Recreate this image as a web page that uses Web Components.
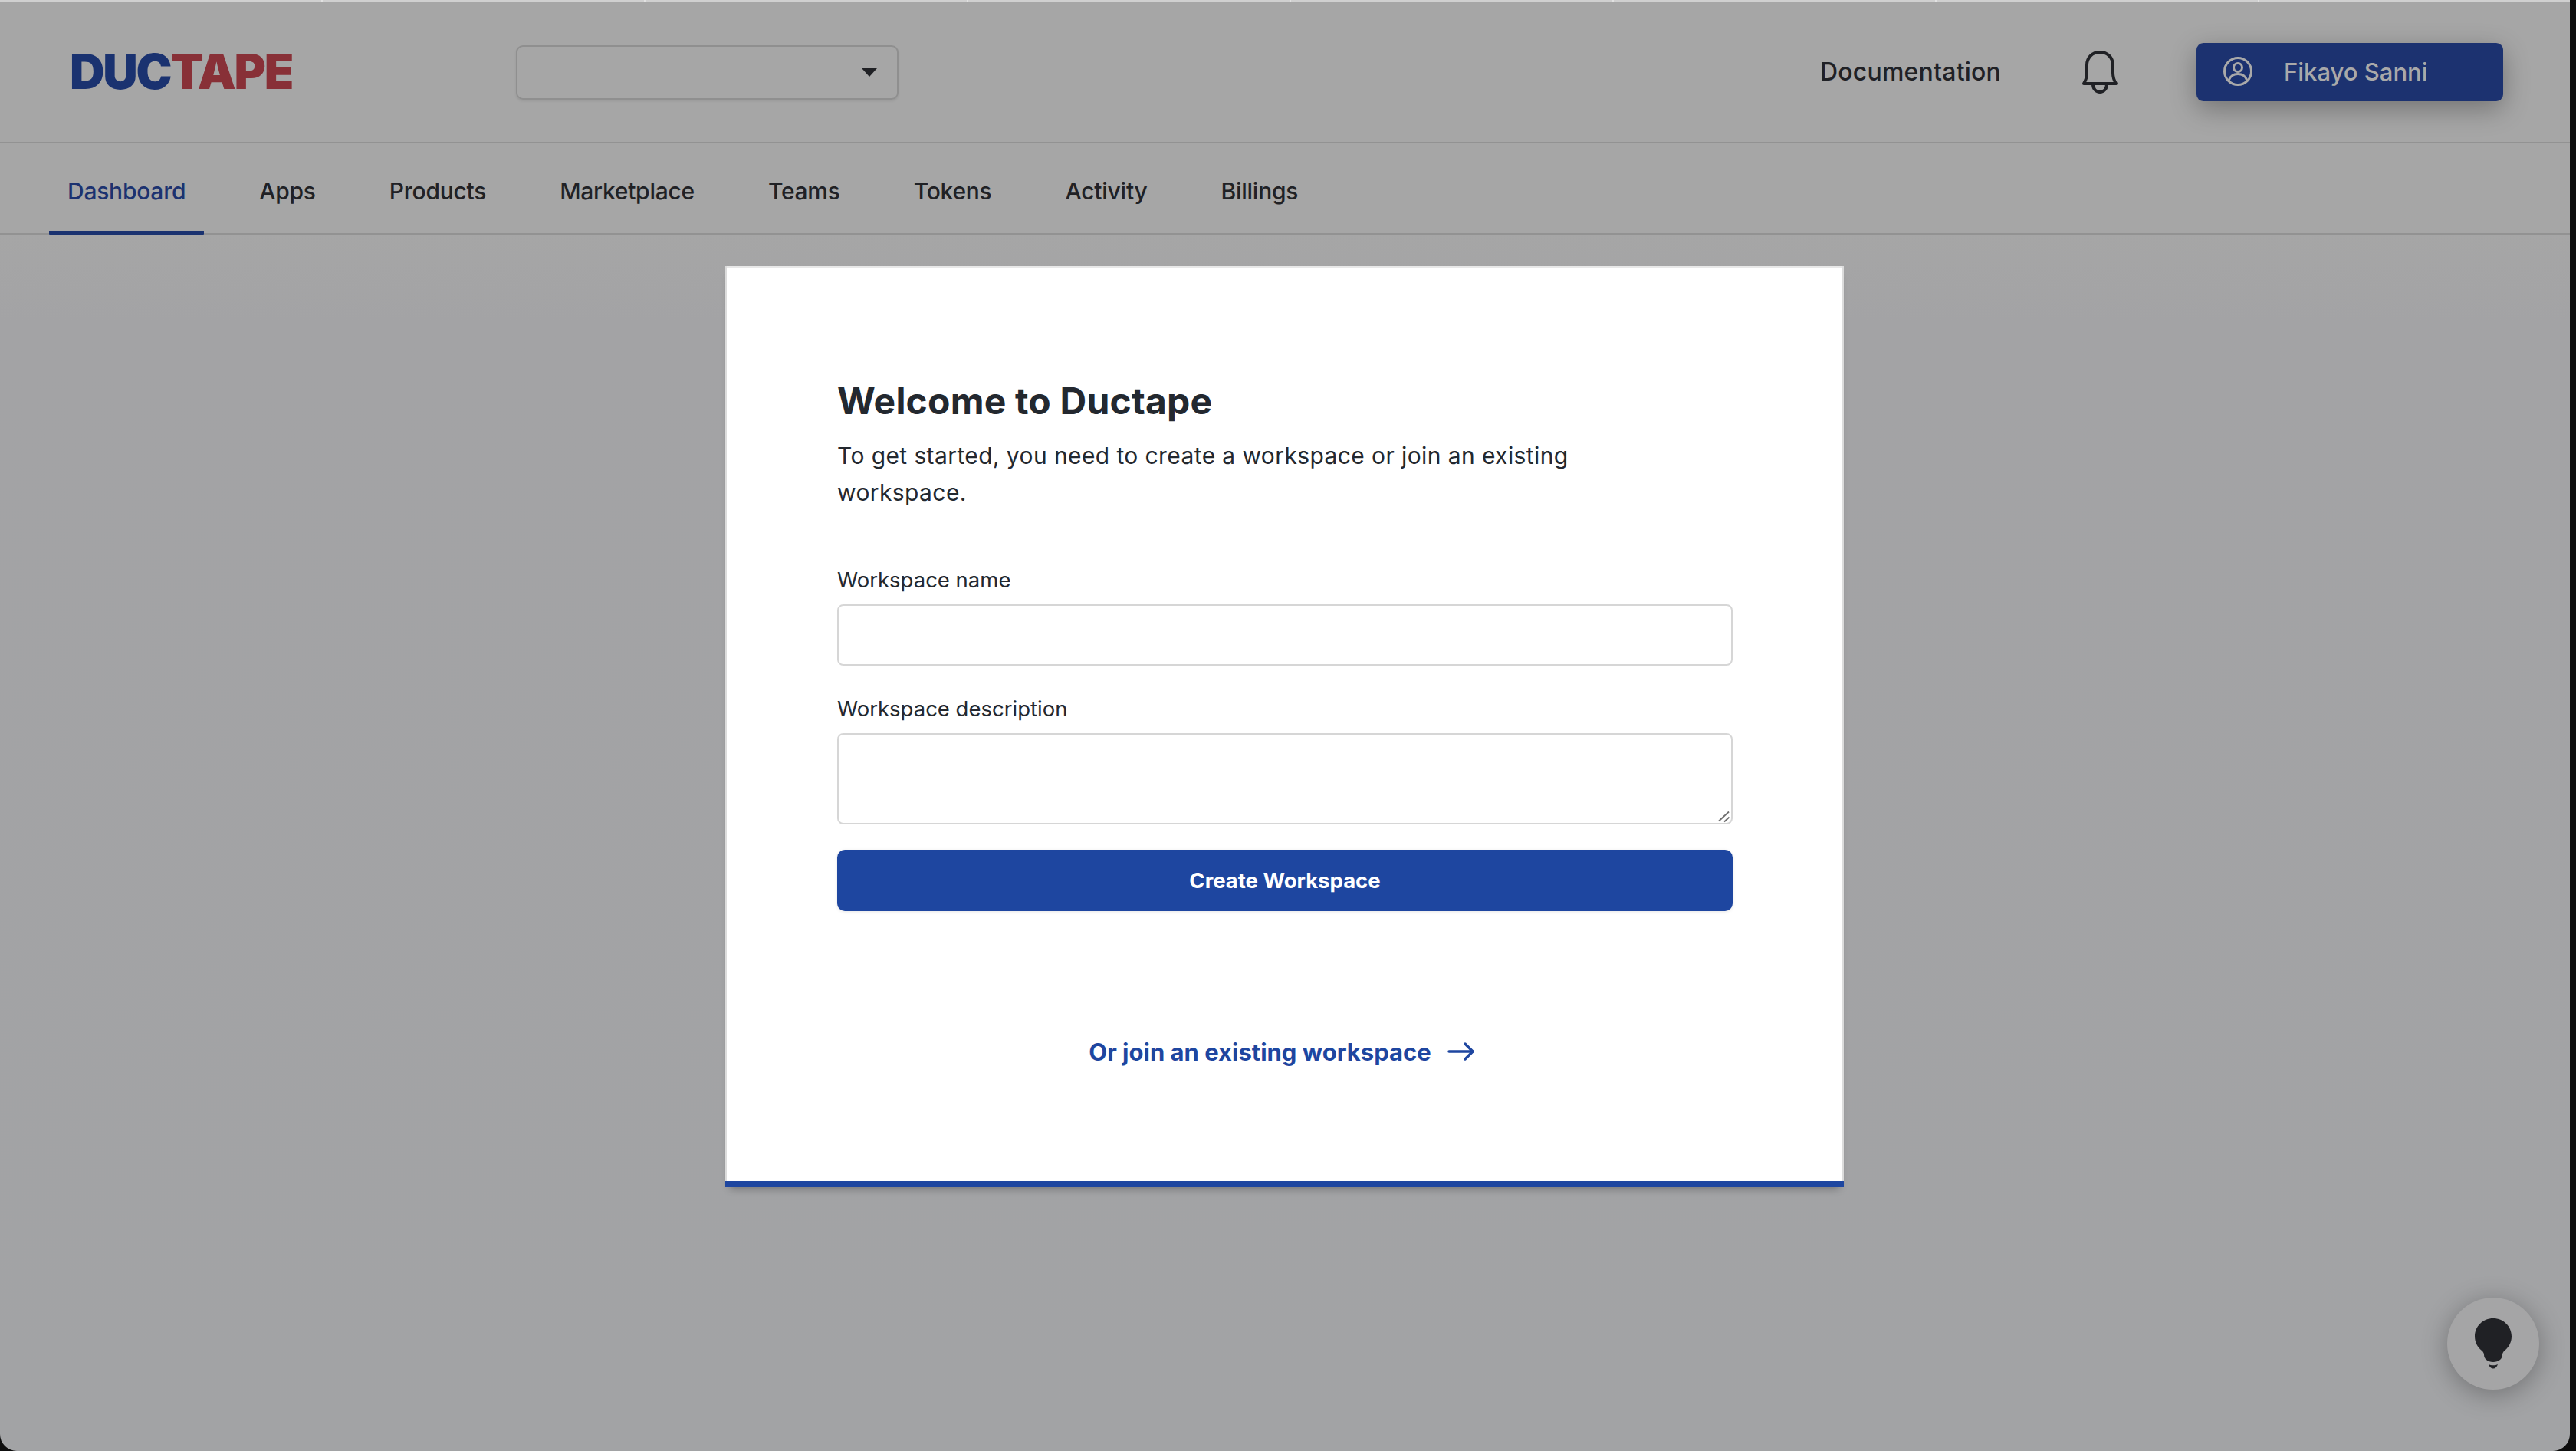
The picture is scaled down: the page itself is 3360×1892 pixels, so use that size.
<!DOCTYPE html>
<html lang="en">
<head>
<meta charset="utf-8">
<title>Ductape</title>
<style>
  html, body { margin: 0; height: 100%; background: #0e0e0e; }
  body { font-family: "Inter", "Liberation Sans", sans-serif; color: #202125; overflow: hidden; }
</style>
</head>
<body>
<dt-app>
  <dt-header name="Fikayo Sanni"></dt-header>
  <dt-nav active="Dashboard" items="Dashboard,Apps,Products,Marketplace,Teams,Tokens,Activity,Billings"></dt-nav>
  <dt-card>
    <h1 slot="title">Welcome to Ductape</h1>
    <p slot="intro">To get started, you need to create a workspace or join an existing workspace.</p>
    <dt-field label="Workspace name"></dt-field>
    <dt-field label="Workspace description" multiline></dt-field>
    <dt-button>Create Workspace</dt-button>
    <dt-join slot="footer">Or join an existing workspace</dt-join>
  </dt-card>
  <dt-help slot="overlay"></dt-help>
</dt-app>

<script>
const FONT = '"Inter", "Liberation Sans", sans-serif';

class DtApp extends HTMLElement {
  constructor() {
    super();
    this.attachShadow({ mode: 'open' }).innerHTML = `
    <style>
      :host {
        display: flex;
        flex-direction: column;
        position: relative;
        width: 3352px;
        height: 1892px;
        overflow: hidden;
        border-radius: 0 0 22px 22px;
        background: linear-gradient(#a6a6a6 0, #a6a6a6 300px, #a3a3a5 420px, #a2a3a5 100%);
      }
      .tabs-strip {
        flex: 0 0 2px;
        background: repeating-linear-gradient(90deg, #d0d0d0 0 419px, #e2e2e2 419px 421px);
      }
      .tabs-line { flex: 0 0 1px; background: #7d7d7d; }
    </style>
    <div class="tabs-strip"></div>
    <div class="tabs-line"></div>
    <slot></slot>
    <slot name="overlay"></slot>`;
  }
}

class DtHeader extends HTMLElement {
  constructor() {
    super();
    const name = this.getAttribute('name');
    this.attachShadow({ mode: 'open' }).innerHTML = `
    <style>
      :host {
        display: flex;
        align-items: center;
        box-sizing: border-box;
        height: 184px;
        padding: 0 87px 0 91px;
        border-bottom: 2px solid #929292;
        font-family: ${FONT};
      }
      .logo {
        width: 582px;
        margin-bottom: 2px;
        font: 900 63px/1 ${FONT};
        letter-spacing: -2.2px;
      }
      .logo .a { color: #1a3270; }
      .logo .b { color: #883037; }
      .select {
        box-sizing: border-box;
        display: flex;
        align-items: center;
        justify-content: flex-end;
        width: 499px;
        height: 71px;
        padding-right: 26px;
        border: 2px solid #8f8f8f;
        border-radius: 9px;
        box-shadow: 0 2px 3px rgba(0, 0, 0, .08);
      }
      .caret { width: 0; height: 0; border: 10px solid transparent; border-top: 11px solid #202125; border-bottom: 0; }
      .spacer { flex: 1; }
      .doc { margin: 0 103px 2px 0; font-size: 32px; font-weight: 500; letter-spacing: .2px; color: #202125; }
      .bell { width: 52px; height: 58px; margin-right: 100px; display: block; }
      .user {
        box-sizing: border-box;
        display: flex;
        align-items: center;
        width: 400px;
        height: 76px;
        padding: 0 0 2px 34px;
        border-radius: 9px;
        background: #1c3270;
        color: #a9a9a9;
        box-shadow: 0 10px 34px rgba(0, 0, 0, .3);
        font-size: 31px;
        font-weight: 500;
      }
      .user svg { width: 40px; height: 40px; margin-right: 40px; display: block; }
    </style>
    <div class="logo"><span class="a">DUC</span><span class="b">TAPE</span></div>
    <div class="select"><span class="caret"></span></div>
    <span class="spacer"></span>
    <span class="doc">Documentation</span>
    <svg class="bell" viewBox="0 0 52 58" fill="none" stroke="#202125" stroke-width="4" stroke-linecap="round" stroke-linejoin="round">
      <path d="M5 44c3-5 4-9 4-14V20C9 10 16 3 26 3s17 7 17 17v10c0 5 1 9 4 14z"/>
      <path d="M17 45c0 6 4 10 9 10s9-4 9-10"/>
    </svg>
    <div class="user">
      <svg viewBox="0 0 40 40" fill="none" stroke="#a9a9a9" stroke-width="3">
        <circle cx="20" cy="20" r="17.5"/>
        <circle cx="20" cy="15" r="5.5"/>
        <path d="M8 32c2-6 7-8.500 12-8.500s10 2.500 12 8.500"/>
      </svg>
      <span>${name}</span>
    </div>`;
  }
}

class DtNav extends HTMLElement {
  constructor() {
    super();
    const active = this.getAttribute('active');
    const tabs = this.getAttribute('items').split(',').map(t =>
      `<a class="${t === active ? 'on' : ''}">${t}</a>`).join('');
    this.attachShadow({ mode: 'open' }).innerHTML = `
    <style>
      :host {
        display: flex;
        box-sizing: border-box;
        height: 119px;
        padding-left: 64px;
        gap: 48px;
        border-bottom: 2px solid #929292;
        font-family: ${FONT};
      }
      a {
        box-sizing: border-box;
        display: flex;
        align-items: center;
        height: 119px;
        padding: 4px 24px 0;
        font-size: 30px;
        font-weight: 500;
        letter-spacing: -.25px;
        color: #202125;
      }
      .on { color: #1c3270; border-bottom: 5px solid #1a3270; padding-top: 9px; border-radius: 0 0 1px 1px; }
    </style>
    ${tabs}`;
  }
}

class DtCard extends HTMLElement {
  constructor() {
    super();
    this.attachShadow({ mode: 'open' }).innerHTML = `
    <style>
      :host {
        display: block;
        box-sizing: border-box;
        width: 1459px;
        height: 1201px;
        margin: 41px 0 0 946px;
        padding: 146px 145px 0 146px;
        background: #fff;
        border-bottom: 8px solid #1e46a0;
        box-shadow: inset 2px 0 #dcdcdc, inset -2px 0 #dcdcdc, inset 0 2px #e8e8e8, 0 8px 10px -6px rgba(0, 0, 0, .3);
        color: #23282f;
        font-family: ${FONT};
      }
      ::slotted(h1) { margin: 0; font-size: 48px; line-height: 60px; font-weight: 700; letter-spacing: .2px; color: #23282f; }
      ::slotted(p) { margin: 17px 0 71px; width: 1010px; font-size: 30px; line-height: 48px; letter-spacing: .4px; }
      .form { display: flex; flex-direction: column; }
      .foot { display: flex; justify-content: center; margin-top: 163px; }
    </style>
    <slot name="title"></slot>
    <slot name="intro"></slot>
    <div class="form"><slot></slot></div>
    <div class="foot"><slot name="footer"></slot></div>`;
  }
}

class DtField extends HTMLElement {
  constructor() {
    super();
    const multi = this.hasAttribute('multiline');
    this.attachShadow({ mode: 'open' }).innerHTML = `
    <style>
      :host { display: block; position: relative; margin-bottom: 37px; font-family: ${FONT}; }
      :host([multiline]) { margin-bottom: 33px; }
      label { display: block; height: 38px; margin-bottom: 13px; font-size: 27.500px; line-height: 38px; color: #23282f; }
      .box {
        box-sizing: border-box;
        display: block;
        width: 100%;
        height: ${multi ? 119 : 80}px;
        border: 2px solid #d6d6d6;
        border-radius: 8px;
        background: #fff;
        outline: 0;
        padding: 8px 16px;
        font: inherit;
        resize: none;
      }
      .grip { position: absolute; right: 2px; bottom: 2px; width: 18px; height: 18px; }
    </style>
    <label>${this.getAttribute('label')}</label>
    ${multi ? `<textarea class="box"></textarea>
    <svg class="grip" viewBox="0 0 18 18" stroke="#6f6f6f" stroke-width="1.800" fill="none">
      <path d="M2 15.500L15 3.500"/><path d="M9 16.500L15.500 10.500"/>
    </svg>` : '<input class="box" type="text">'}`;
  }
}

class DtButton extends HTMLElement {
  constructor() {
    super();
    this.attachShadow({ mode: 'open' }).innerHTML = `
    <style>
      :host {
        display: flex;
        align-items: center;
        justify-content: center;
        height: 80px;
        border-radius: 10px;
        background: #1e46a0;
        color: #fff;
        font: 700 27.500px ${FONT};
        box-shadow: 0 1px 4px rgba(0, 0, 0, .1);
      }
    </style>
    <slot></slot>`;
  }
}

class DtJoin extends HTMLElement {
  constructor() {
    super();
    this.attachShadow({ mode: 'open' }).innerHTML = `
    <style>
      :host {
        display: inline-flex;
        align-items: center;
        gap: 21px;
        height: 40px;
        margin-right: 8px;
        color: #1e46a0;
        font: 700 31px ${FONT};
      }
      svg { width: 36px; height: 24px; display: block; }
    </style>
    <slot></slot>
    <svg viewBox="0 0 36 24" fill="none" stroke="#1e46a0" stroke-width="3.500" stroke-linecap="round" stroke-linejoin="round">
      <path d="M2 12h31"/><path d="M23 2l10 10-10 10"/>
    </svg>`;
  }
}

class DtHelp extends HTMLElement {
  constructor() {
    super();
    this.attachShadow({ mode: 'open' }).innerHTML = `
    <style>
      :host {
        position: absolute;
        left: 3192px;
        top: 1692px;
        width: 120px;
        height: 120px;
        display: flex;
        align-items: center;
        justify-content: center;
        border-radius: 50%;
        background: #a5a5a6;
        box-shadow: 0 6px 34px rgba(0, 0, 0, .3);
      }
      svg { width: 48px; height: 66px; display: block; }
    </style>
    <svg viewBox="0 0 48 66" fill="#202125">
      <path d="M24 0C10.700 0 0 10.500 0 23.500 0 31 3.500 37.500 9 42c2 1.700 3 3.500 3 5.500C12 53 17 57 24 57s12-4 12-9.500c0-2 1-3.800 3-5.500 5.500-4.500 9-11 9-18.500C48 10.500 37.300 0 24 0z"/>
      <path d="M18 60c3 1.800 9 1.800 12 0-1 3.500-3.500 5.500-6 5.500S19 63.500 18 60z"/>
    </svg>`;
  }
}

customElements.define('dt-app', DtApp);
customElements.define('dt-header', DtHeader);
customElements.define('dt-nav', DtNav);
customElements.define('dt-card', DtCard);
customElements.define('dt-field', DtField);
customElements.define('dt-button', DtButton);
customElements.define('dt-join', DtJoin);
customElements.define('dt-help', DtHelp);
</script>
</body>
</html>
